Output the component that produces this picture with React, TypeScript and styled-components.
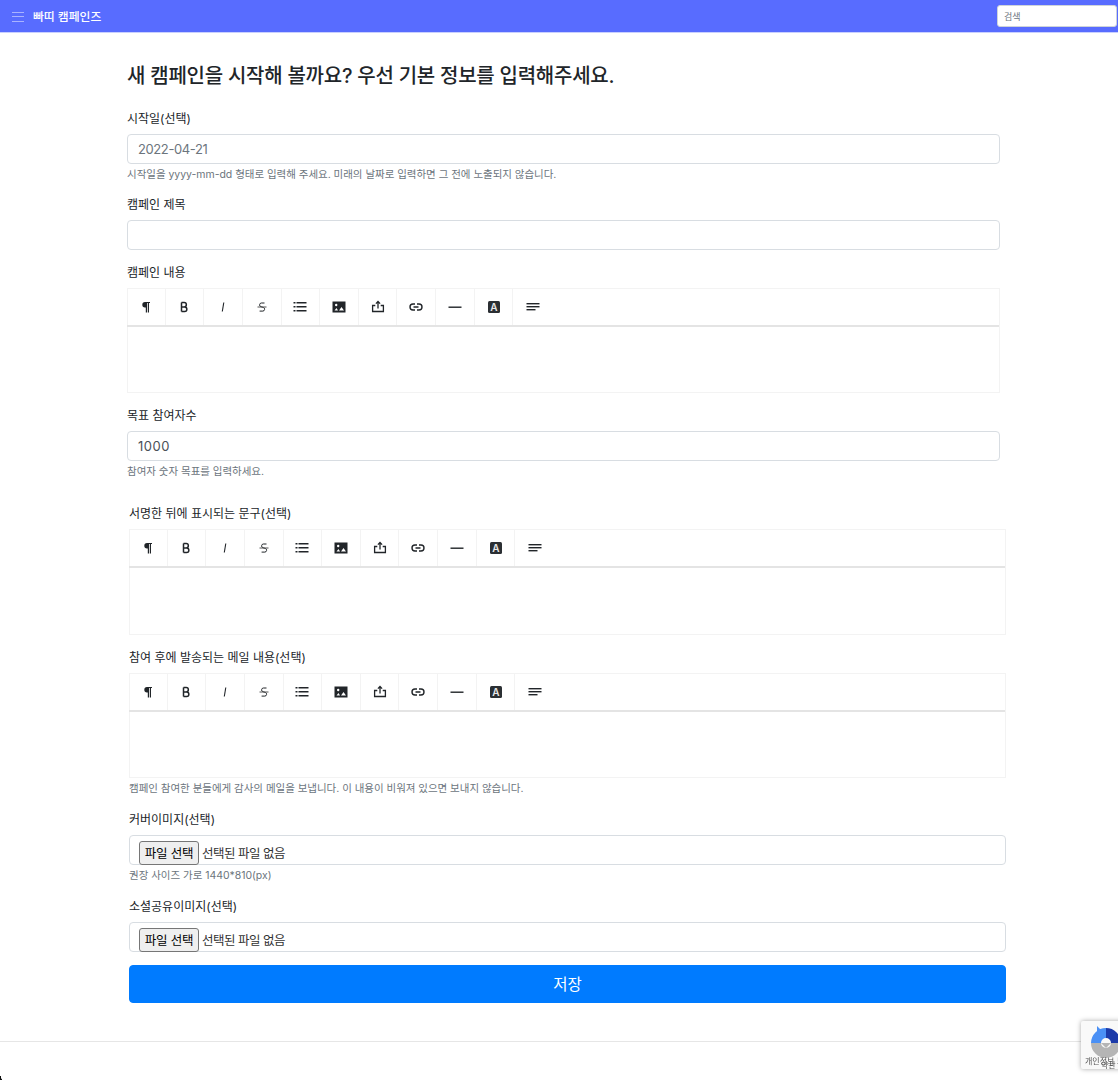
import styled, { createGlobalStyle } from 'styled-components';

const GlobalStyle = createGlobalStyle`
	html, body {
		margin: 0;
		padding: 0;
		height: 1080px;
		overflow: hidden;
		background: #fff;
	}
	* {
		box-sizing: border-box;
	}
	body {
		font-family: Inter, "Noto Sans CJK KR", sans-serif;
		color: #212529;
	}
`;

const NavBar = styled.header`
	display: flex;
	align-items: center;
	height: 33px;
	background-color: #586cff;
	border-bottom: 1px solid #c9d0ff;
	padding-left: 12px;
`;

const Burger = styled.div`
	display: flex;
	flex-direction: column;
	gap: 3.5px;
	width: 12px;
	margin-right: 9px;
	padding-top: 1px;

	span {
		display: block;
		height: 1px;
		background-color: #a9b3ff;
	}
`;

const Brand = styled.span`
	color: #fff;
	font-size: 11.8px;
	font-weight: 500;
	line-height: 32px;
	padding-top: 1px;
`;

const SearchBox = styled.input`
	margin-left: auto;
	margin-right: 1px;
	width: 120px;
	height: 22px;
	border: 1px solid #ced4da;
	border-radius: 3px;
	padding: 0 6px;
	font: 9px Inter, "Noto Sans CJK KR", sans-serif;
	background: #fff;

	&::placeholder {
		color: #6c757d;
	}
`;

const Main = styled.main`
	padding: 30px 0 0 127px;
	width: 1006px;
`;

const Heading = styled.h1`
	margin: 0 0 18.75px;
	font-size: 20px;
	letter-spacing: -0.25px;
	line-height: 26px;
	font-weight: 500;
	color: #212529;
`;

const Help = styled.small`
	display: block;
	font-size: 10.5px;
	letter-spacing: -0.03px;
	line-height: 15px;
	margin-top: 3px;
	color: #6c757d;
`;

const Section = styled.section<{ $wide?: boolean }>`
	width: ${(p) => (p.$wide ? '877px' : '873px')};
	margin-left: ${(p) => (p.$wide ? '2px' : '0')};
	margin-top: ${(p) => (p.$wide ? '24px' : '0')};

	${Help} {
		margin-bottom: ${(p) => (p.$wide ? '13px' : '0')};
	}
`;

const Group = styled.div`
	margin-bottom: 12px;
`;

const Label = styled.label`
	display: block;
	font-size: 12px;
	line-height: 22px;
	margin-bottom: 4px;
	color: #212529;
`;

const TextInput = styled.input<{ $tracking?: string }>`
	display: block;
	width: 100%;
	height: 30px;
	border: 1px solid #d8dde2;
	border-radius: 4px;
	padding: 0 10px;
	font: 13px Inter, "Noto Sans CJK KR", sans-serif;
	letter-spacing: ${(p) => p.$tracking || '0'};
	color: #495057;
	background: #fff;
	outline: none;

	&:disabled {
		color: #6c757d;
	}
`;

const Editor = styled.div`
	border: 1px solid #f3f3f3;
`;

const Toolbar = styled.div`
	display: flex;
	height: 38px;
	margin-left: -1px;
	border-bottom: 2px solid #e4e4e4;
	background: transparent;
`;

const ToolButton = styled.div`
	display: flex;
	align-items: center;
	justify-content: center;
	width: 38.65px;
	border-right: 1px solid #f3f3f3;
	color: #212529;

	&:last-child {
		border-right: none;
	}
`;

const EditArea = styled.div`
	height: 65.5px;
	background: #fff;
`;

const FileBox = styled.div`
	display: flex;
	align-items: center;
	height: 30px;
	border: 1px solid #d8dde2;
	border-radius: 4px;
	padding: 5px 0 0 9px;
	font-size: 12.5px;
	letter-spacing: -0.5px;
	color: #333;
`;

const FileButton = styled.button`
	height: 24px;
	width: 60px;
	margin-right: 3px;
	padding: 0;
	background: #efefef;
	border: 1px solid #767676;
	border-radius: 3px;
	font: 12.5px Inter, "Noto Sans CJK KR", sans-serif;
	letter-spacing: -0.2px;
	color: #000;
`;

const SaveButton = styled.button`
	display: block;
	width: 100%;
	height: 38px;
	margin-top: 13px;
	padding: 0 0 2px;
	border: 1px solid #007bff;
	border-radius: 4px;
	background-color: #007bff;
	color: #fff;
	font: 15.5px Inter, "Noto Sans CJK KR", sans-serif;
`;

const Footer = styled.footer`
	margin-top: 38px;
	border-top: 1px solid #e6e6e6;
`;

const Recaptcha = styled.div`
	position: fixed;
	left: 1081px;
	top: 1021px;
	width: 60px;
	height: 48px;
	background: #f9f9f9;
	border-radius: 2px;
	box-shadow: 0 0 5px rgba(0, 0, 0, 0.35);
	overflow: hidden;

	svg {
		position: absolute;
		left: 8px;
		top: 5px;
	}
`;

const RecaptchaLine = styled.span<{ $second?: boolean }>`
	position: absolute;
	left: ${(p) => (p.$second ? '20px' : '4px')};
	top: ${(p) => (p.$second ? '39px' : '35px')};
	font-size: 8px;
	line-height: 10px;
	white-space: nowrap;
	color: #555;
`;

const WindowCorner = styled.div`
	position: fixed;
	left: 0;
	bottom: 0;
	width: 6px;
	height: 4px;
	background: radial-gradient(circle at 100% 0, transparent 70%, #111 75%);
`;

const ToolIcon = styled.svg.attrs({ width: 16, height: 16, viewBox: '0 0 16 16' })`
	display: block;
	flex: none;
`;

const toolIcons = [
	// paragraph
	<ToolIcon key='p' fill='currentColor'>
		<path d='M7 3h5v1h-1v9.5H9.8V4H9v9.5H7.8V8.4H7A2.7 2.7 0 0 1 7 3z' />
	</ToolIcon>,
	// bold
	<ToolIcon key='b' fill='none' stroke='currentColor' strokeWidth='1.5'>
		<path d='M5.5 3.6v8.8M5.5 3.6h2.7a2.1 2.1 0 0 1 0 4.3H5.5M8.2 7.9h.4a2.25 2.25 0 0 1 0 4.5H5.5' />
	</ToolIcon>,
	// italic
	<ToolIcon key='i' fill='none' stroke='currentColor' strokeWidth='1.1'>
		<path d='M8.8 3.5 7.3 12.5' />
	</ToolIcon>,
	// strike
	<ToolIcon key='s' fill='none' stroke='currentColor' strokeWidth='1'>
		<path d='M10.5 4H7.4a1.9 1.9 0 0 0-.5 3.7l2.4.7a1.9 1.9 0 0 1-.5 3.7H5.6' />
		<path d='M3.5 8h9' stroke='#555' />
	</ToolIcon>,
	// list
	<ToolIcon key='l' fill='currentColor'>
		<rect x='1.5' y='3' width='2' height='1.5' />
		<rect x='1.5' y='7' width='2' height='1.5' />
		<rect x='1.5' y='11' width='2' height='1.5' />
		<rect x='4.5' y='3' width='10' height='1.5' />
		<rect x='4.5' y='7' width='10' height='1.5' />
		<rect x='4.5' y='11' width='10' height='1.5' />
	</ToolIcon>,
	// image
	<ToolIcon key='m'>
		<rect x='1.5' y='2.5' width='13' height='11' fill='currentColor' />
		<circle cx='5.2' cy='6' r='1.2' fill='#fff' />
		<path d='M3.5 11.5 5.5 9l1.5 2.5zM8 11.5 10.5 8l2.5 3.5z' fill='#fff' />
	</ToolIcon>,
	// upload
	<ToolIcon key='u' fill='none' stroke='currentColor' strokeWidth='1.3'>
		<path d='M5.3 6.5H2.6v6h10.8v-6h-2.7' />
		<path d='M8 9.5V2.5M5.9 4.6 8 2.5l2.1 2.1' />
	</ToolIcon>,
	// link
	<ToolIcon key='k' fill='none' stroke='currentColor' strokeWidth='1.4'>
		<path d='M7 5H5a3 3 0 0 0 0 6h2M9 5h2a3 3 0 0 1 0 6H9M5.5 8h5' />
	</ToolIcon>,
	// horizontal rule
	<ToolIcon key='h' fill='currentColor'>
		<rect x='1.5' y='7.5' width='13' height='1.4' />
	</ToolIcon>,
	// text colour
	<ToolIcon key='a'>
		<rect x='2' y='2' width='12' height='12' rx='1.5' fill='#2b2f33' />
		<text x='8' y='12' textAnchor='middle' fontSize='10' fontWeight='600' fontFamily='Inter, sans-serif' fill='#e8e8e8'>
			A
		</text>
	</ToolIcon>,
	// align
	<ToolIcon key='t' fill='currentColor'>
		<rect x='1.5' y='4' width='13' height='1.4' />
		<rect x='1.5' y='7' width='13' height='1.4' />
		<rect x='1.5' y='10' width='9' height='1.4' />
	</ToolIcon>,
];

function EditorField() {
	return (
		<Editor>
			<Toolbar>
				{toolIcons.map((icon) => (
					<ToolButton key={icon.key}>{icon}</ToolButton>
				))}
			</Toolbar>
			<EditArea />
		</Editor>
	);
}

function FileField() {
	return (
		<FileBox>
			<FileButton type='button'>파일 선택</FileButton>
			선택된 파일 없음
		</FileBox>
	);
}

export default function App(): JSX.Element {
	return (
		<>
			<GlobalStyle />
			<NavBar>
				<Burger>
					<span></span>
					<span></span>
					<span></span>
				</Burger>
				<Brand>빠띠 캠페인즈</Brand>
				<SearchBox placeholder='검색' />
			</NavBar>
			<Main>
				<Heading>새 캠페인을 시작해 볼까요? 우선 기본 정보를 입력해주세요.</Heading>
				<Section>
					<Group>
						<Label>시작일(선택)</Label>
						<TextInput disabled defaultValue='2022-04-21' $tracking='-0.4px' />
						<Help>시작일을 yyyy-mm-dd 형태로 입력해 주세요. 미래의 날짜로 입력하면 그 전에 노출되지 않습니다.</Help>
					</Group>
					<Group>
						<Label>캠페인 제목</Label>
						<TextInput />
					</Group>
					<Group>
						<Label>캠페인 내용</Label>
						<EditorField />
					</Group>
					<Group>
						<Label>목표 참여자수</Label>
						<TextInput defaultValue='1000' $tracking='0.5px' />
						<Help>참여자 숫자 목표를 입력하세요.</Help>
					</Group>
				</Section>
				<Section $wide>
					<Group>
						<Label>서명한 뒤에 표시되는 문구(선택)</Label>
						<EditorField />
					</Group>
					<Group>
						<Label>참여 후에 발송되는 메일 내용(선택)</Label>
						<EditorField />
						<Help>캠페인 참여한 분들에게 감사의 메일을 보냅니다. 이 내용이 비워져 있으면 보내지 않습니다.</Help>
					</Group>
					<Group>
						<Label>커버이미지(선택)</Label>
						<FileField />
						<Help>권장 사이즈 가로 1440*810(px)</Help>
					</Group>
					<Group>
						<Label>소셜공유이미지(선택)</Label>
						<FileField />
					</Group>
					<SaveButton type='button'>저장</SaveButton>
				</Section>
			</Main>
			<Footer />
			<Recaptcha>
				<svg width='34' height='34' viewBox='0 0 34 34' fill='none' strokeWidth='10'>
					<path d='M7 17a10 10 0 0 0 20 0' stroke='#b5b5b5' />
					<path d='M7 17A10 10 0 0 1 17 7' stroke='#4a90f5' />
					<path d='M17 7a10 10 0 0 1 10 10' stroke='#1c3aa9' />
					<path d='M8 0v12l6-6z' fill='#4a90f5' stroke='none' />
					<path d='M12 17h10l-5 5z' fill='#b5b5b5' stroke='none' />
				</svg>
				<RecaptchaLine>개인정보 보호</RecaptchaLine>
				<RecaptchaLine $second>약관</RecaptchaLine>
			</Recaptcha>
			<WindowCorner />
		</>
	);
}
